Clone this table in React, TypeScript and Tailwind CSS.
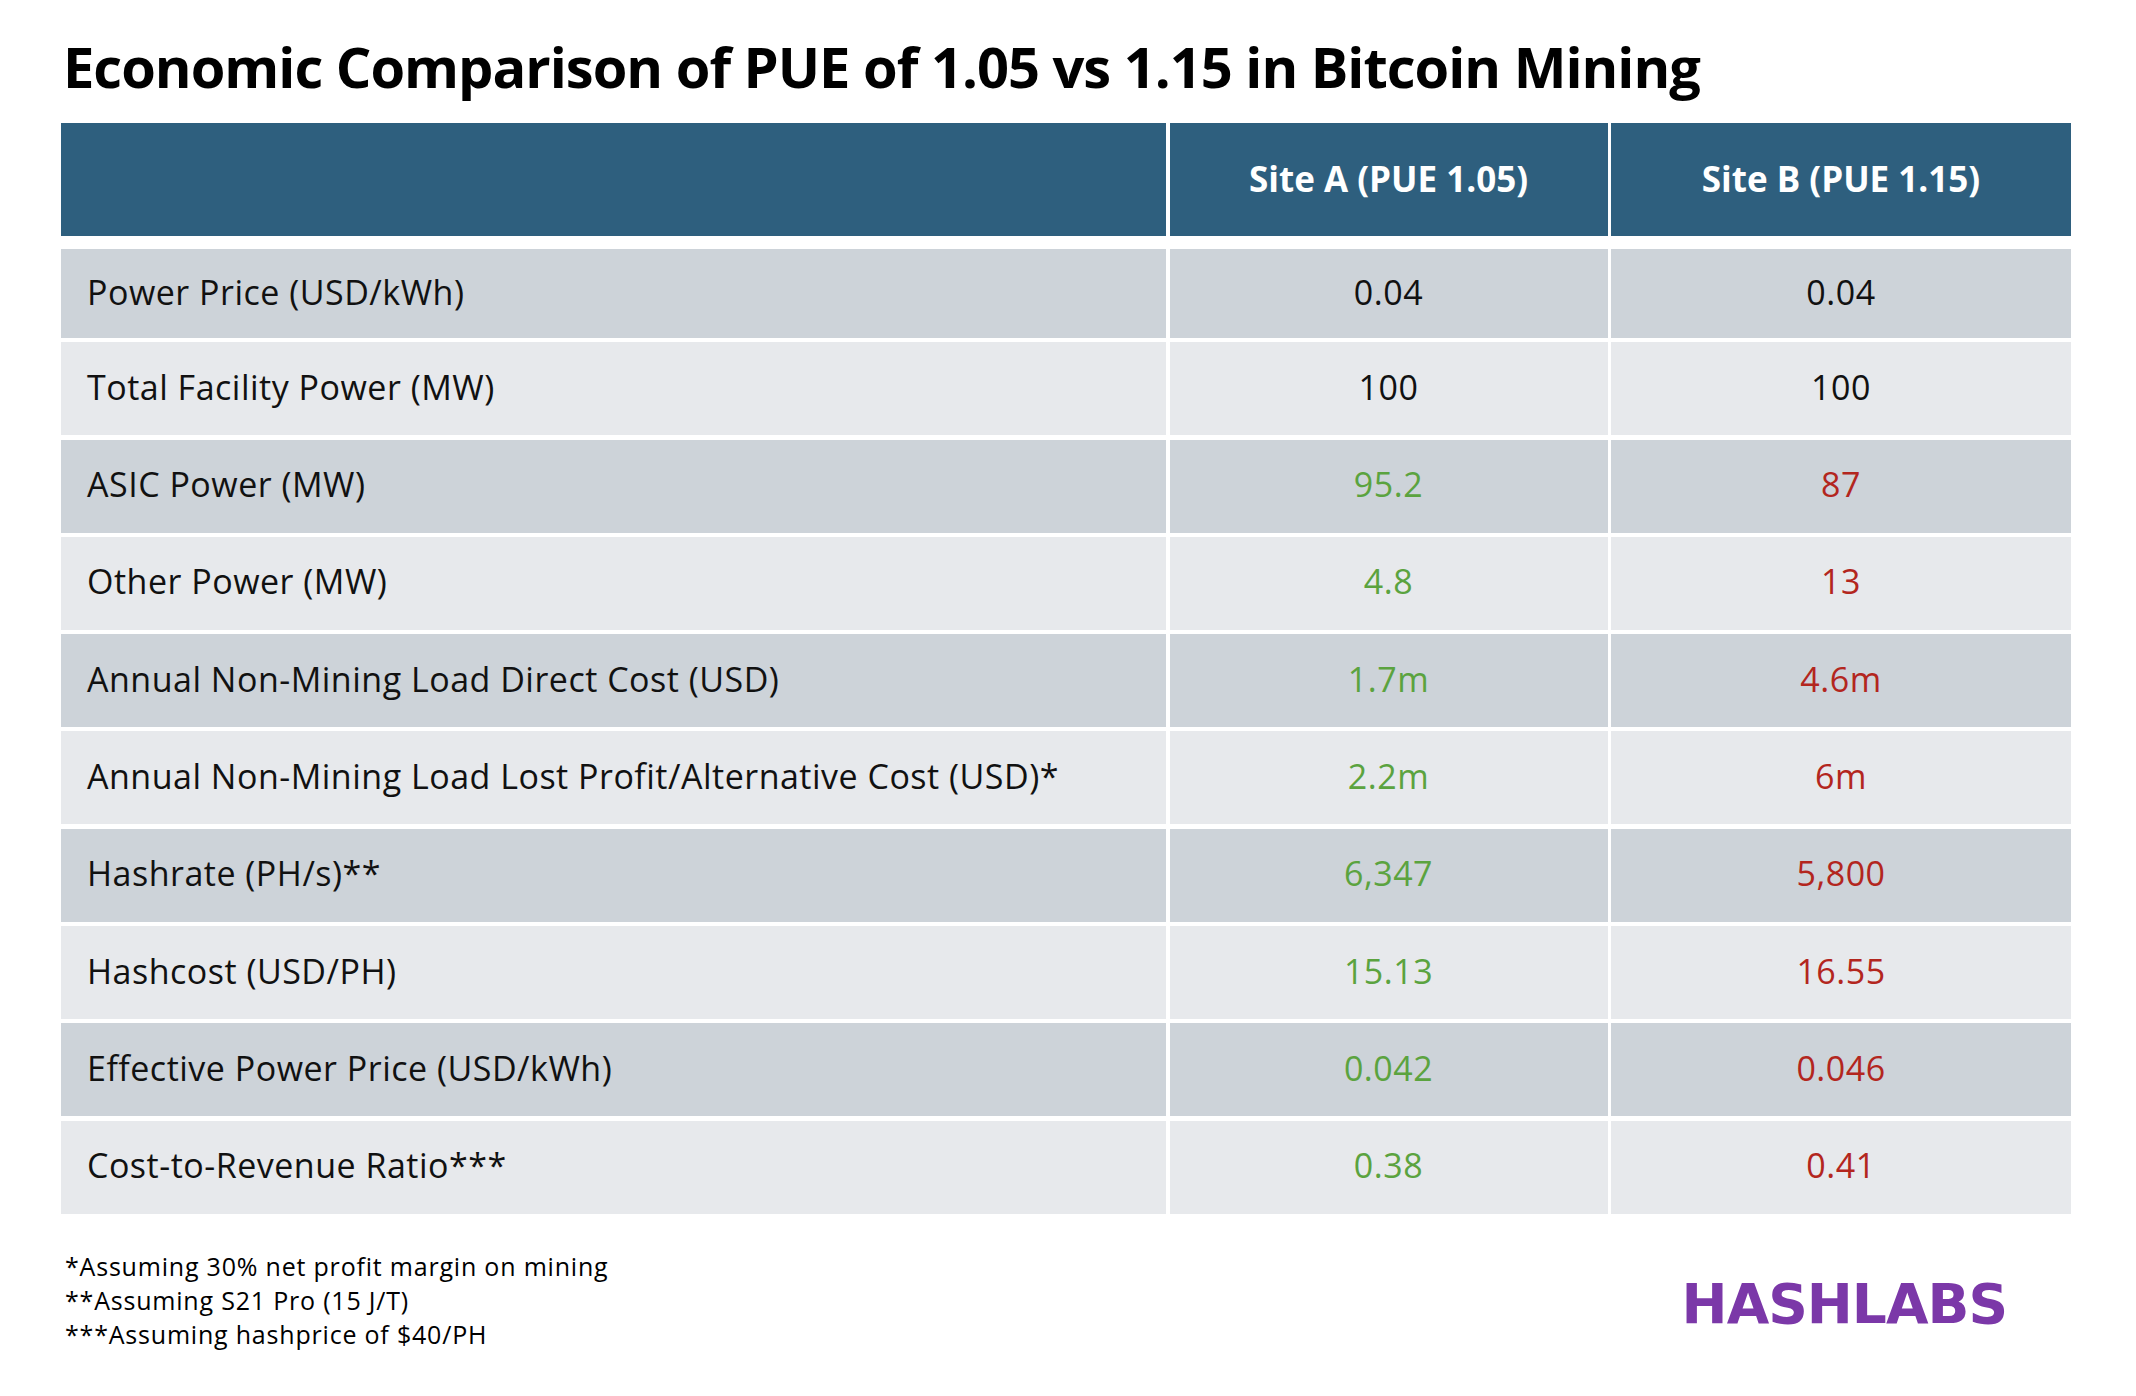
import React from "react";

type Row = { label: string; a: string; b: string; tone?: "diff" };

const ROWS: Row[] = [
  { label: "Power Price (USD/kWh)", a: "0.04", b: "0.04" },
  { label: "Total Facility Power (MW)", a: "100", b: "100" },
  { label: "ASIC Power (MW)", a: "95.2", b: "87", tone: "diff" },
  { label: "Other Power (MW)", a: "4.8", b: "13", tone: "diff" },
  { label: "Annual Non-Mining Load Direct Cost (USD)", a: "1.7m", b: "4.6m", tone: "diff" },
  { label: "Annual Non-Mining Load Lost Profit/Alternative Cost (USD)*", a: "2.2m", b: "6m", tone: "diff" },
  { label: "Hashrate (PH/s)**", a: "6,347", b: "5,800", tone: "diff" },
  { label: "Hashcost (USD/PH)", a: "15.13", b: "16.55", tone: "diff" },
  { label: "Effective Power Price (USD/kWh)", a: "0.042", b: "0.046", tone: "diff" },
  { label: "Cost-to-Revenue Ratio***", a: "0.38", b: "0.41", tone: "diff" },
];

export default function App() {
  return (
    <div
      className="min-h-[1396px] w-[2136px] bg-white pl-[61px] pt-[38px] text-[#111]"
      style={{ fontFamily: "'Open Sans', 'Liberation Sans', sans-serif" }}
    >
      <h1 className="pl-[2px] text-[56px] font-bold leading-none tracking-[-1px] text-black">
        Economic Comparison of PUE of 1.05 vs 1.15 in Bitcoin Mining
      </h1>

      {/* table */}
      <div className="mt-[29px] w-[2010px]">
        <div className="grid h-[113px] grid-cols-[1105px_438px_460px] gap-x-[3.5px]">
          <div className="bg-[#2e5f7e]" />
          <div className="flex items-center justify-center bg-[#2e5f7e] text-[35px] font-bold text-white">
            Site A (PUE 1.05)
          </div>
          <div className="flex items-center justify-center bg-[#2e5f7e] text-[35px] font-bold text-white">
            Site B (PUE 1.15)
          </div>
        </div>

        <div className="mt-[13px] flex flex-col gap-y-[4.3px]">
          {ROWS.map((r, i) => {
            const bg = i % 2 === 0 ? "bg-[#cdd3d9]" : "bg-[#e7e9ec]";
            const h = i === 0 ? "h-[89px]" : "h-[93px]";
            const aColor = r.tone ? "text-[#5ba33f]" : "text-[#111]";
            const bColor = r.tone ? "text-[#b3261e]" : "text-[#111]";
            return (
              <div
                key={r.label}
                className={`grid grid-cols-[1105px_438px_460px] gap-x-[3.5px] text-[34px] tracking-[0.5px] ${h}`}
              >
                <div className={`flex items-center pb-[3px] pl-[26px] ${bg}`}>{r.label}</div>
                <div className={`flex items-center justify-center pb-[3px] ${bg} ${aColor}`}>{r.a}</div>
                <div className={`flex items-center justify-center pb-[3px] ${bg} ${bColor}`}>{r.b}</div>
              </div>
            );
          })}
        </div>
      </div>

      {/* footnotes + logo */}
      <div className="mt-[35px] flex w-[2010px] items-start justify-between">
        <div className="pl-[4px] text-[25px] leading-[34px] tracking-[0.8px] text-black">
          <p>*Assuming 30% net profit margin on mining</p>
          <p>**Assuming S21 Pro (15 J/T)</p>
          <p>***Assuming hashprice of $40/PH</p>
        </div>
        <div
          className="mr-[64px] mt-[28px] text-[55px] font-bold leading-none tracking-[-1px] text-[#7b38a8]"
          style={{ fontFamily: "'DejaVu Sans', sans-serif" }}
        >
          HASHLABS
        </div>
      </div>
    </div>
  );
}
